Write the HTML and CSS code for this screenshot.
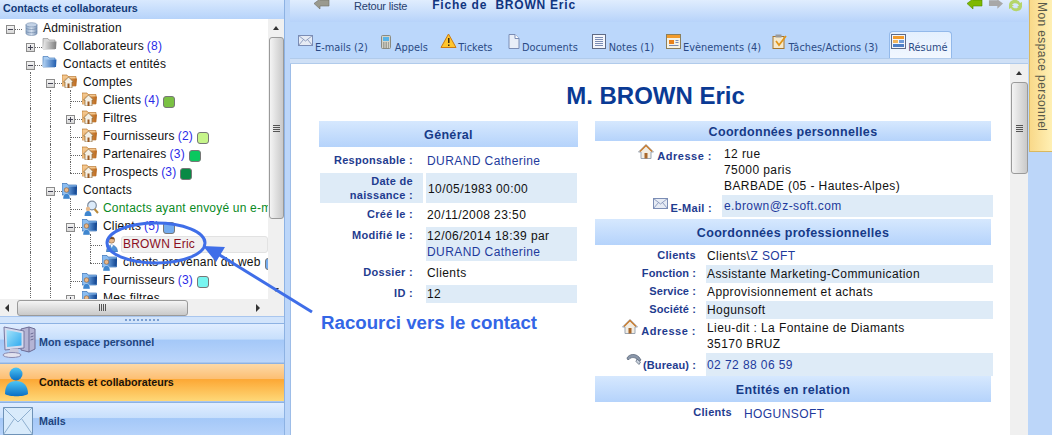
FILE: index.html
```html
<!DOCTYPE html>
<html lang="fr">
<head>
<meta charset="utf-8">
<title>Fiche de BROWN Eric</title>
<link rel="stylesheet" href="styles.css">
</head>
<body>
<svg class="defs" width="0" height="0" aria-hidden="true">
  <defs>
    <linearGradient id="fo" x1="0" y1="0" x2="1" y2="0"><stop offset="0" stop-color="#f3c183"/><stop offset="1" stop-color="#b9661a"/></linearGradient>
    <linearGradient id="fb" x1="0" y1="0" x2="1" y2="0"><stop offset="0" stop-color="#b5d4f4"/><stop offset="1" stop-color="#1f5cae"/></linearGradient>
    <linearGradient id="fbd" x1="0" y1="0" x2="1" y2="0"><stop offset="0" stop-color="#6fa6e2"/><stop offset="1" stop-color="#0c3f8c"/></linearGradient>
    <linearGradient id="fg" x1="0" y1="0" x2="1" y2="0"><stop offset="0" stop-color="#ececec"/><stop offset="1" stop-color="#7d7d7d"/></linearGradient>
    <linearGradient id="db" x1="0" y1="0" x2="1" y2="0"><stop offset="0" stop-color="#8fa9c9"/><stop offset=".5" stop-color="#d5e0ee"/><stop offset="1" stop-color="#7d95b5"/></linearGradient>
    <linearGradient id="pb" x1="0" y1="0" x2="0" y2="1"><stop offset="0" stop-color="#4cc5f5"/><stop offset="1" stop-color="#0a6fc4"/></linearGradient>
    <linearGradient id="scr" x1="0" y1="0" x2="1" y2="1"><stop offset="0" stop-color="#a5e4fb"/><stop offset="1" stop-color="#2fa9ee"/></linearGradient>
    <symbol id="i-db" viewBox="0 0 14 15"><path d="M1 3v9c0 1.500 2.700 2.500 6 2.500s6-1 6-2.500V3z" fill="url(#db)" stroke="#6d86a8" stroke-width=".6"/><ellipse cx="7" cy="3" rx="6" ry="2.300" fill="#c4d3e6" stroke="#6d86a8" stroke-width=".6"/><path d="M1 6.500c1 2 11 2 12 0M1 10c1 2 11 2 12 0" fill="none" stroke="#6d86a8" stroke-width=".7"/></symbol>
    <symbol id="i-fgrey" viewBox="0 0 15 13"><path d="M1 12V1.500h5l1 1.500h6v9z" fill="#d8d8d8" stroke="#8a8a8a" stroke-width=".6"/><path d="M1 12l1-7.500h12.500L14 12z" fill="url(#fg)"/></symbol>
    <symbol id="i-fblue" viewBox="0 0 15 13"><path d="M1 12V1.500h5l1 1.500h6v9z" fill="#a9cdf2" stroke="#2f68b0" stroke-width=".6"/><path d="M1 12l1-7.500h12.500L14 12z" fill="url(#fb)"/></symbol>
    <symbol id="i-fhouse" viewBox="0 0 15 14"><path d="M0 12V1h5l1 1.500h8V12z" fill="#f3c68d" stroke="#b06a1c" stroke-width=".6"/><path d="M.5 12l1-7.500H15L14 12z" fill="url(#fo)"/><path d="M6.500 3L1.500 8h1.500v6h7V8h1.500z" fill="#f4f0e6" stroke="#8c6a3a" stroke-width=".7"/><path d="M5.500 9.500h2V14h-2z" fill="#9c5a22"/></symbol>
    <symbol id="i-fcontact" viewBox="0 0 15 17"><path d="M0 13V1.500h5l1 1.500h8.500v10z" fill="#8cbdf0" stroke="#1d5aa8" stroke-width=".6"/><path d="M5 12.500l1.500-8H15l-.5 8z" fill="url(#fbd)"/><circle cx="4.500" cy="8" r="2.300" fill="#e9b787" stroke="#7a4a1e" stroke-width=".5"/><path d="M1 17c0-4 1.500-5.500 3.500-5.500S8 13 8 17z" fill="#3f86cf" stroke="#fff" stroke-width=".4"/></symbol>
    <symbol id="i-person" viewBox="0 0 12 16"><circle cx="5.500" cy="4" r="3.200" fill="#e6b98c" stroke="#6a4a2a" stroke-width=".5"/><path d="M2.500 3.500c0-3.500 6-3.500 6 0-2-.7-4-.7-6 0z" fill="#7a4a1e"/><path d="M.5 16c0-5 2.500-7 5-7s6 2 6 7z" fill="#4f93d8" stroke="#2a5f9e" stroke-width=".5"/><path d="M4.500 9h2.500l-1.200 3z" fill="#fff"/></symbol>
    <symbol id="i-search" viewBox="0 0 16 16"><circle cx="9" cy="5.500" r="4.300" fill="#dcebfa" stroke="#7f8da0" stroke-width="1.200"/><path d="M11.500 9l3.500 4" stroke="#b98a3a" stroke-width="2"/><circle cx="5" cy="9" r="2.200" fill="#e6b98c"/><path d="M1.500 16c0-3.500 1.500-5 3.500-5s3.500 1.500 3.500 5z" fill="#3f86cf"/></symbol>
    <symbol id="i-mail" viewBox="0 0 15 11"><rect x=".5" y=".5" width="14" height="10" fill="#e6ebf4" stroke="#7b8db5"/><path d="M.5.500L7.500 6l7-5.500M.5 10.500l5-6M14.500 10.500l-5-6" fill="none" stroke="#7b8db5" stroke-width=".8"/></symbol>
    <symbol id="i-home" viewBox="0 0 16 15"><path d="M8 .5L.5 8H3v6.500h10V8h2.500z" fill="#f2ede3" stroke="#9aa5b3"/><path d="M2 7.500L8 1.500l6 6" fill="none" stroke="#c8792a" stroke-width="1.400"/><rect x="6.500" y="9" width="3" height="5.500" fill="#a8672a"/></symbol>
    <symbol id="i-phone" viewBox="0 0 16 13"><path d="M1 5C3 1 9 0 13 4l2 3-2 1.500-2-2.500C8 4 5 4 3 6.500L1.500 6.500z" fill="#8a97aa" stroke="#4f5c70" stroke-width=".7"/><path d="M11 6l3.500 3-1.500 2.500-3-3z" fill="#c9d2de" stroke="#4f5c70" stroke-width=".7"/></symbol>
  </defs>
</svg>

<div class="app">
  <aside class="side">
    <div class="side-title">Contacts et collaborateurs</div>
    <div class="tree-box">
      <div class="tree">
        <div class="row"><span class="c e minus"></span><svg class="ico"><use href="#i-db" x="5" y="4" width="13" height="14"/></svg><span class="lbl">Administration</span></div>
        <div class="row"><span class="c"></span><span class="c t plus"></span><svg class="ico"><use href="#i-fgrey" x="2" y="1" width="15" height="13"/></svg><span class="lbl">Collaborateurs</span><b class="n">(8)</b></div>
        <div class="row"><span class="c"></span><span class="c l minus"></span><svg class="ico"><use href="#i-fblue" x="2" y="1" width="15" height="13"/></svg><span class="lbl">Contacts et entités</span></div>
        <div class="row"><span class="c"></span><span class="c v"></span><span class="c t minus"></span><svg class="ico"><use href="#i-fhouse" x="2" y="2" width="15" height="14"/></svg><span class="lbl">Comptes</span></div>
        <div class="row"><span class="c"></span><span class="c v"></span><span class="c v"></span><span class="c t"></span><svg class="ico"><use href="#i-fhouse" x="2" y="2" width="15" height="14"/></svg><span class="lbl">Clients</span><b class="n">(4)</b><i class="dot dot-a"></i></div>
        <div class="row"><span class="c"></span><span class="c v"></span><span class="c v"></span><span class="c t plus"></span><svg class="ico"><use href="#i-fhouse" x="2" y="2" width="15" height="14"/></svg><span class="lbl">Filtres</span></div>
        <div class="row"><span class="c"></span><span class="c v"></span><span class="c v"></span><span class="c t"></span><svg class="ico"><use href="#i-fhouse" x="2" y="2" width="15" height="14"/></svg><span class="lbl">Fournisseurs</span><b class="n">(2)</b><i class="dot dot-b"></i></div>
        <div class="row"><span class="c"></span><span class="c v"></span><span class="c v"></span><span class="c t"></span><svg class="ico"><use href="#i-fhouse" x="2" y="2" width="15" height="14"/></svg><span class="lbl">Partenaires</span><b class="n">(3)</b><i class="dot dot-c"></i></div>
        <div class="row"><span class="c"></span><span class="c v"></span><span class="c v"></span><span class="c l"></span><svg class="ico"><use href="#i-fhouse" x="2" y="2" width="15" height="14"/></svg><span class="lbl">Prospects</span><b class="n">(3)</b><i class="dot dot-d"></i></div>
        <div class="row"><span class="c"></span><span class="c v"></span><span class="c t minus"></span><svg class="ico"><use href="#i-fcontact" x="2" y="2" width="15" height="17"/></svg><span class="lbl">Contacts</span></div>
        <div class="row"><span class="c"></span><span class="c v"></span><span class="c v"></span><span class="c t"></span><svg class="ico"><use href="#i-search" x="3" y="2" width="16" height="16"/></svg><span class="lbl green">Contacts ayant envoyé un e-mail</span></div>
        <div class="row"><span class="c"></span><span class="c v"></span><span class="c v"></span><span class="c t minus"></span><svg class="ico"><use href="#i-fcontact" x="2" y="2" width="15" height="17"/></svg><span class="lbl">Clients</span><b class="n">(5)</b><i class="dot dot-e"></i></div>
        <div class="row"><span class="c"></span><span class="c v"></span><span class="c v"></span><span class="c v"></span><span class="c t"></span><svg class="ico"><use href="#i-person" x="6" y="2" width="12" height="16"/></svg><span class="lbl sel">BROWN Eric</span></div>
        <div class="row"><span class="c"></span><span class="c v"></span><span class="c v"></span><span class="c v"></span><span class="c l"></span><svg class="ico"><use href="#i-fcontact" x="2" y="2" width="15" height="17"/></svg><span class="lbl">clients provenant du web</span><i class="dot dot-e"></i></div>
        <div class="row"><span class="c"></span><span class="c v"></span><span class="c v"></span><span class="c t"></span><svg class="ico"><use href="#i-fcontact" x="2" y="2" width="15" height="17"/></svg><span class="lbl">Fournisseurs</span><b class="n">(3)</b><i class="dot dot-f"></i></div>
        <div class="row"><span class="c"></span><span class="c v"></span><span class="c v"></span><span class="c t plus"></span><svg class="ico"><use href="#i-fcontact" x="2" y="2" width="15" height="17"/></svg><span class="lbl">Mes filtres</span></div>
      </div>
      <div class="sb-v sb-tree"><span class="up"></span><span class="thumb"><span class="grip"></span></span><span class="down"></span></div>
    </div>
    <div class="sb-h"><span class="left"></span><span class="thumb"><span class="grip"></span></span><span class="right"></span></div>
    <div class="split"><span class="dots"></span></div>
    <nav class="nav">
      <div class="nav-item">
        <svg class="nav-ico" width="36" height="32" viewBox="0 0 36 32"><path d="M21 3l8-2 6 2v20l-6 3-8-2z" fill="#b4b4d4" stroke="#6c6c95"/><path d="M29 1v25" stroke="#6c6c95"/><path d="M30.500 8l3-1M30.500 11l3-1M30.500 14l3-1" stroke="#6c6c95"/><path d="M4 1l20 4v17L5 24z" fill="#d5dbee" stroke="#7777a0"/><path d="M6.500 4l15 3v12.500L7 21z" fill="url(#scr)"/><path d="M10 23l8-.5 1 4-10 .5z" fill="#c9c9dc"/><ellipse cx="12" cy="29" rx="9" ry="2.500" fill="#e2e2ee" stroke="#8a8ab0"/></svg>
        <span>Mon espace personnel</span>
      </div>
      <div class="nav-item active">
        <svg class="nav-ico" width="36" height="32" viewBox="0 0 36 32"><circle cx="16" cy="8" r="6.500" fill="url(#pb)"/><path d="M5 28c0-9 4-13 11-13s12 4 12 13c-4 3-19 3-23 0z" fill="url(#pb)"/></svg>
        <span>Contacts et collaborateurs</span>
      </div>
      <div class="nav-item">
        <svg class="nav-ico" width="36" height="28" viewBox="0 0 36 28"><rect x="3.500" y=".5" width="29" height="27" fill="#d9ebfb" stroke="#6f93b8"/><path d="M3.500.5L18 15 32.500.5M3.500 27.500l11-16M32.500 27.500l-11-16" fill="none" stroke="#8fb0d0"/></svg>
        <span>Mails</span>
      </div>
    </nav>
  </aside>

  <div class="gutter"></div>

  <main class="main">
    <header class="topbar">
      <svg class="tb-arrow" width="16" height="11" viewBox="0 0 16 11"><path d="M6 0L0 4.500 6 10V7h9V1H6z" fill="#9a9a8f" stroke="#6f6f66" stroke-width=".6"/></svg>
      <span class="back">Retour liste</span>
      <span class="fiche">Fiche de&nbsp; BROWN Eric</span>
      <span class="tb-right">
        <svg width="16" height="11" viewBox="0 0 16 11"><path d="M6 0L0 4.500 6 10V7h9V1H6z" fill="#7fb800" stroke="#4f8a00" stroke-width=".6"/></svg>
        <svg width="15" height="11" viewBox="0 0 16 11"><path d="M10 0l6 4.500L10 10V7H1V1h9z" fill="#a8a8a8"/></svg>
        <svg width="15" height="13" viewBox="0 0 15 13"><path d="M1 6c0-6 9-7 11-2l2-1v5h-5l2-1.500C9.500 3.500 5 3.500 4 6z" fill="#b5d56a"/><path d="M14 7c0 6-9 7-11 2l-2 1V6h5L4 7.500C5.500 10 10 10 11 7z" fill="#b5d56a"/></svg>
      </span>
    </header>
    <div class="tabs">
      <div class="tab tab-mail"><svg class="t-ico"><use href="#i-mail" x="0" y="1" width="15" height="11"/></svg><span>E-mails (2)</span></div>
      <div class="tab tab-calls"><svg class="t-ico" viewBox="0 0 15 15"><rect x="3.500" y="1.500" width="9" height="13" rx="1" fill="#d3d3c8" stroke="#8a8a80"/><rect x="5" y="3" width="6" height="4" fill="#58b4e8"/><path d="M5 9h6M5 11h6M5 13h6" stroke="#6f6f66" stroke-dasharray="1.500 1"/></svg><span>Appels</span></div>
      <div class="tab tab-tickets"><svg class="t-ico" viewBox="0 0 15 15"><path d="M7.500 0L15 13.500H0z" fill="#ffc62e" stroke="#cc7a10"/><path d="M7 4h1.500v5H7zM7 10.500h1.500V12H7z" fill="#3a2a10"/></svg><span>Tickets</span></div>
      <div class="tab tab-docs"><svg class="t-ico" viewBox="0 0 15 15"><path d="M4 .5h6l4 4v10H4z" fill="#e8eef8" stroke="#7b8db5"/><path d="M10 .5v4h4" fill="#fff" stroke="#7b8db5"/></svg><span>Documents</span></div>
      <div class="tab tab-notes"><svg class="t-ico" viewBox="0 0 15 15"><rect x=".5" y=".5" width="13" height="14" fill="#f4f6fb" stroke="#5f6b86"/><path d="M3 3.500h8M3 5.500h8M3 7.500h8M3 9.500h8M3 11.500h8" stroke="#7b8db5"/></svg><span>Notes (1)</span></div>
      <div class="tab tab-events"><svg class="t-ico" viewBox="0 0 15 15"><rect x=".5" y=".5" width="14" height="14" fill="#f6f2e4" stroke="#8b7f5c"/><rect x="1" y="1" width="13" height="3" fill="#f29b2b"/><rect x="3" y="6" width="5" height="4" fill="#e8811a"/><path d="M9.500 6.500h3M9.500 8.500h3M3 11.500h9.500" stroke="#7b8db5"/></svg><span>Evènements (4)</span></div>
      <div class="tab tab-tasks"><svg class="t-ico" viewBox="0 0 15 15"><rect x="1" y="2.500" width="11" height="12" fill="#f5e9cc" stroke="#a6762e"/><rect x="3.500" y=".5" width="6" height="3" fill="#9a9a9a"/><path d="M4 7l3 4 7-9" fill="none" stroke="#e0951a" stroke-width="1.700"/></svg><span>Tâches/Actions (3)</span></div>
      <div class="tab tab-sum on"><svg class="t-ico" viewBox="0 0 15 15"><rect x=".5" y=".5" width="14" height="14" fill="#f4f6fb" stroke="#5f6b86"/><rect x="2" y="2" width="11" height="3" fill="#f29b2b"/><rect x="2" y="6" width="5" height="3" fill="#f2b55b"/><rect x="8" y="6" width="5" height="3" fill="#6f9bd8"/><rect x="2" y="10" width="11" height="3" fill="#4f7fc4"/></svg><span>Résumé</span></div>
    </div>
    <div class="tabline"></div>
    <div class="body">
      <div class="sheet">
        <h1 class="name">M. BROWN Eric</h1>
        <div class="cols">
          <section class="col-l">
            <h2 class="sec sec-l">Général</h2>
            <div class="gen g-resp"><span class="k">Responsable :</span><span class="val link">DURAND Catherine</span></div>
            <div class="gen g-date"><span class="k shade">Date de<br>naissance :</span><span class="val shade mid">10/05/1983 00:00</span></div>
            <div class="gen g-line"><span class="k">Créé le :</span><span class="val">20/11/2008 23:50</span></div>
            <div class="gen g-mod"><span class="k">Modifié le :</span><span class="val shade">12/06/2014 18:39 par<br><span class="link">DURAND Catherine</span></span></div>
            <div class="gen g-line"><span class="k">Dossier :</span><span class="val">Clients</span></div>
            <div class="gen g-id"><span class="k">ID :</span><span class="val shade">12</span></div>
          </section>
          <section class="col-r">
            <h2 class="sec sec-p">Coordonnées personnelles</h2>
            <div class="perso addr"><span class="k k-wide"><svg class="k-ico k-home"><use href="#i-home" width="16" height="15"/></svg>Adresse :</span><span class="val">12 rue<br>75000 paris<br>BARBADE (05 - Hautes-Alpes)</span></div>
            <div class="perso mailrow"><span class="k"><svg class="k-ico k-mail"><use href="#i-mail" width="15" height="11"/></svg>E-Mail :</span><span class="val shade link">e.brown@z-soft.com</span></div>
            <h2 class="sec sec-b">Coordonnées professionnelles</h2>
            <div class="pro p-first"><span class="k k-c">Clients</span><span class="val">Clients\<span class="link">Z SOFT</span></span></div>
            <div class="pro"><span class="k">Fonction :</span><span class="val shade">Assistante Marketing-Communication</span></div>
            <div class="pro"><span class="k">Service :</span><span class="val">Approvisionnement et achats</span></div>
            <div class="pro"><span class="k">Société :</span><span class="val shade">Hogunsoft</span></div>
            <div class="pro p-addr"><span class="k k-a k-wide"><svg class="k-ico k-home"><use href="#i-home" width="16" height="15"/></svg>Adresse :</span><span class="val">Lieu-dit : La Fontaine de Diamants<br>35170 BRUZ</span></div>
            <div class="pro p-tel"><span class="k k-a"><svg class="k-ico k-phone"><use href="#i-phone" width="16" height="13"/></svg>(Bureau) :</span><span class="val shade link mid">02 72 88 06 59</span></div>
            <h2 class="sec sec-b">Entités en relation</h2>
            <div class="rel"><span class="k">Clients</span><span class="val link">HOGUNSOFT</span></div>
          </section>
        </div>
      </div>
      <div class="sb-v sb-main"><span class="up"></span><span class="thumb"><span class="grip"></span></span></div>
    </div>
  </main>

  <div class="rail"><div class="rail-tab">Mon espace personnel</div></div>
</div>

<svg class="mark" width="340" height="110" viewBox="0 0 340 110" aria-hidden="true">
  <ellipse cx="56" cy="23" rx="49" ry="20" fill="none" stroke="#3f6ee8" stroke-width="3"/>
  <path d="M212 92L118 34" stroke="#3f6ee8" stroke-width="3" fill="none"/>
  <path d="M103 26l22 1-9 15z" fill="#3f6ee8"/>
</svg>
<div class="callout">Racourci vers le contact</div>
</body>
</html>
```
FILE: styles.css
```css
* { box-sizing: border-box; }
html, body { margin: 0; padding: 0; height: 100%; overflow: hidden; }
body { font-family: "Liberation Sans", Arial, sans-serif; font-size: 12px; color: #111; background: #bcd6f9; position: relative; }
.defs { position: absolute; }
.app { display: flex; width: 1052px; height: 435px; }

/* sidebar */
.side { width: 285px; flex: none; display: flex; flex-direction: column; border-right: 1px solid #8db2e3; background: #d6e6fb; overflow: hidden; }
.side-title { height: 19px; flex: none; padding: 1px 3px 0; font-weight: bold; font-size: 10.7px; line-height: 15px; color: #123a78; background: linear-gradient(#d9e9fe, #b6d3fa); white-space: nowrap; }
.tree-box { height: 280px; flex: none; display: flex; background: #fff; overflow: hidden; }
.tree { flex: 1; min-width: 0; overflow: hidden; margin-top: -1px; }
.row { height: 18px; display: flex; align-items: center; white-space: nowrap; font-size: 12px; letter-spacing: .2px; }
.c { width: 20px; height: 18px; flex: none; position: relative; background-repeat: no-repeat; }
.c.v::before, .c.t::before { content: ""; position: absolute; left: 10px; top: 0; bottom: 0; border-left: 1px dotted #666; }
.c.l::before { content: ""; position: absolute; left: 10px; top: 0; height: 11px; border-left: 1px dotted #666; }
.c.t::after, .c.l::after, .c.e::after { content: ""; position: absolute; left: 10px; top: 11px; width: 12px; border-top: 1px dotted #666; }
.c.minus { background-image:
  linear-gradient(#445, #445),
  linear-gradient(#f4f4f4, #d8d8d8),
  linear-gradient(#8b8b8b, #8b8b8b);
  background-size: 5px 1px, 7px 7px, 9px 9px;
  background-position: 8px 11px, 7px 8px, 6px 7px; }
.c.plus { background-image:
  linear-gradient(#445, #445),
  linear-gradient(#445, #445),
  linear-gradient(#f4f4f4, #d8d8d8),
  linear-gradient(#8b8b8b, #8b8b8b);
  background-size: 5px 1px, 1px 5px, 7px 7px, 9px 9px;
  background-position: 8px 11px, 10px 9px, 7px 8px, 6px 7px; }
.c.minus::after, .c.plus::after { left: 15px; width: 7px; }
.c.minus::before, .c.plus::before { display: none; }
.ico { width: 23px; height: 18px; flex: none; overflow: visible; }
.lbl, .n { margin-top: 2px; }
.lbl { color: #111; }
.n { font-weight: normal; color: #2a2ae8; margin-left: 3px; }
.green { color: #0a8a1f; }
.lbl.sel { flex: 1; color: #8a0f1f; background: #f1f1f1; border: 1px solid #e2e2e2; border-radius: 3px; margin-left: -2px; padding: 0 1px; line-height: 15px; }
.dot { width: 12px; height: 12px; margin: 5px 0 0 4px; border-radius: 3px; border: 1px solid #777; flex: none; }
.dot-a { background: #7ac143; }
.dot-b { background: #c6f58a; }
.dot-c { background: #0bc85f; }
.dot-d { background: #098a45; }
.dot-e { background: #74acef; }
.dot-f { background: #78f5f0; }

/* scrollbars */
.sb-v { width: 16px; flex: none; background: #f0f0f0; position: relative; display: flex; flex-direction: column; align-items: center; }
.sb-tree { height: 280px; }
.sb-tree .thumb { height: 182px; }
.sb-v .up { height: 18px; width: 100%; flex: none; position: relative; }
.sb-v .up::after { content: ""; position: absolute; left: 50%; top: 7px; margin-left: -3px; border: 3px solid transparent; border-top: 0; border-bottom: 4px solid #333; }
.sb-v .down { position: absolute; bottom: 0; height: 18px; width: 100%; }
.sb-v .down::after { content: ""; position: absolute; left: 50%; top: 7px; margin-left: -3px; border: 3px solid transparent; border-bottom: 0; border-top: 4px solid #333; }
.thumb { display: flex; align-items: center; justify-content: center; flex: none; border: 1px solid #9a9a9a; border-radius: 3px; background: linear-gradient(90deg, #f4f4f4, #dcdcdc 55%, #c9c9c9); width: 15px; }
.grip { width: 7px; height: 7px; background: repeating-linear-gradient(#555 0 1px, transparent 1px 2px); }
.sb-h { height: 17px; flex: none; background: #f0f0f0; display: flex; align-items: center; position: relative; padding-left: 17px; }
.sb-h .thumb { width: 171px; height: 16px; background: linear-gradient(#f4f4f4, #dcdcdc 55%, #c9c9c9); }
.sb-h .grip { width: 7px; height: 7px; background: repeating-linear-gradient(90deg, #555 0 1px, transparent 1px 2px); }
.sb-h .left { position: absolute; left: 5px; top: 5px; border: 4px solid transparent; border-left: 0; border-right: 4px solid #333; }
.sb-h .right { position: absolute; left: 256px; top: 5px; border: 4px solid transparent; border-right: 0; border-left: 4px solid #333; }
.split { height: 7px; flex: none; background: #d2e4fb; display: flex; align-items: center; justify-content: center; border-top: 1px solid #a9c6ee; }
.dots { width: 34px; height: 2px; background: repeating-linear-gradient(90deg, #7b9fd1 0 2px, transparent 2px 4px); }
.nav { flex: none; display: flex; flex-direction: column; gap: 1px; background: #a9c6ee; }
.nav-item { height: 38px; flex: none; display: flex; align-items: center; gap: 3px; padding-bottom: 2px; font-weight: bold; font-size: 10.7px; color: #21457f; background: linear-gradient(#e0edff, #c7dffc 40%, #a4c8f8 42%, #bcd6fb); border-top: 1px solid #8db2e3; }
.nav-item:first-child { height: 39px; }
.nav-item.active { color: #1a1208; background: linear-gradient(#fdd9a7, #fdbf73 40%, #fca835 42%, #fed878); }
.nav-ico { flex: none; overflow: visible; }

.gutter { width: 5px; flex: none; background: #bcd6f9; }

/* main */
.main { width: 738px; flex: none; display: flex; flex-direction: column; }
.topbar { height: 22px; flex: none; display: flex; background: linear-gradient(#e0edfe, #b7d3fa); position: relative; }
.tb-arrow { margin: -1px 0 0 24px; flex: none; }
.back { margin-left: 24px; font-size: 11px; line-height: 13px; color: #27406e; letter-spacing: -.2px; }
.fiche { margin-left: 25px; font-weight: bold; font-size: 12px; line-height: 10px; letter-spacing: .78px; color: #10357f; white-space: nowrap; }
.tb-right { margin-left: auto; margin-right: 5px; display: flex; gap: 5px; height: 14px; align-items: flex-start; margin-top: -1px; }
.tabs { height: 36px; flex: none; display: flex; padding: 9px 0 0 8px; background: #bbd7fb; align-items: stretch; }
.tab { display: flex; gap: 2px; font-family: "DejaVu Sans", sans-serif; font-size: 9.8px; color: #2a4a85; white-space: nowrap; padding-top: 3px; }
.tab span { margin-top: 8px; line-height: 12px; }
.tab-calls { margin-left: 10px; }
.tab-tickets { margin-left: 13.5px; }
.tab-docs { margin-left: 12.5px; }
.tab-notes { margin-left: 14px; }
.tab-events { margin-left: 12px; }
.tab-tasks { margin-left: 10.5px; }
.tab-sum { margin-left: 11px; }
.t-ico { width: 15px; height: 15px; flex: none; overflow: visible; }
.tab.on { background: linear-gradient(#e4f0fe, #f1f7ff); border: 1px solid #93b9ea; border-bottom: 0; border-radius: 4px 4px 0 0; padding: 2px 4px 0 1px; }
.tabline { height: 6px; flex: none; background: #cfe0f6; border-top: 1px solid #b1cbeb; border-bottom: 1px solid #b1cbeb; }
.body { flex: 1; min-height: 0; display: flex; background: #fff; border-left: 1px solid #9dbde8; }
.sheet { flex: 1; min-width: 0; overflow: hidden; background: #fff; }
.sb-main { width: 18px; }
.sb-main .thumb { height: 92px; width: 17px; }
.name { margin: 18px 0 0; text-align: center; font-size: 24px; line-height: 28px; font-weight: bold; color: #0a3a94; padding-left: 10px; height: 39px; }
.cols { display: flex; padding-left: 28px; gap: 17px; align-items: flex-start; }
.col-l { width: 259px; flex: none; }
.col-r { width: 398px; flex: none; }
.sec { margin: 0; padding-top: 1px; font-size: 12.5px; font-weight: bold; text-align: center; color: #163a88; background: linear-gradient(#d6e8fe, #b5d3fb); letter-spacing: .32px; }
.sec-l { height: 26px; line-height: 26px; }
.sec-p { height: 20px; line-height: 20px; width: 396px; }
.sec-b { height: 26px; line-height: 26px; width: 396px; }
.k { font-weight: bold; font-size: 11px; color: #1f3c8f; text-align: right; letter-spacing: .3px; line-height: 14px; }
.val { font-size: 12px; line-height: 16px; color: #111; letter-spacing: .42px; }
.link { color: #1e3a9c; }
.shade { background: #deebf7; }
.mid { display: flex; align-items: center; }
.gen { display: grid; grid-template-columns: 103px 151px; column-gap: 3px; margin-left: 1px; }
.gen .k { padding-right: 10px; }
.gen .val { padding-left: 1px; }
.g-resp { height: 26px; }
.g-resp .k, .g-resp .val { padding-top: 6px; }
.g-date { height: 30px; }
.g-date .k { padding-top: 1px; }
.gen .mid { padding-left: 2px; padding-top: 1px; }
.g-line { height: 24px; }
.g-line .k, .g-line .val { padding-top: 4px; }
.g-mod { height: 34px; }
.g-mod .k, .g-mod .val { padding-top: 1px; }
.g-id { height: 18px; }
.g-id .k, .g-id .val { padding-top: 1px; }
.perso { display: grid; grid-template-columns: 127px 271px; }
.addr { height: 54px; }
.addr .val { padding: 5px 0 0 2px; }
.mailrow { height: 22px; margin-bottom: 2px; }
.mailrow .val { padding: 3px 0 0 2px; }
.perso .k { display: flex; align-items: flex-start; justify-content: flex-end; padding-top: 8px; padding-right: 10px; }
.mailrow.perso .k { padding-top: 6px; }
.k-ico { flex: none; overflow: visible; }
.k-home { width: 16px; height: 15px; margin: -5px 3px 0 0; }
.k-mail { width: 15px; height: 11px; margin: -3px 2px 0 0; }
.k-phone { width: 16px; height: 13px; margin: -5px 1px 0 0; }
.pro { display: grid; grid-template-columns: 111px 287px; height: 18px; }
.pro .k { display: flex; justify-content: flex-end; padding-right: 10px; padding-top: 1px; letter-spacing: .1px; }
.pro .k.k-wide, .perso .k.k-wide { letter-spacing: .5px; }
.pro .k-a { padding-top: 5px; }
.pro .k-c { padding: 3px 10px 0 0; letter-spacing: .3px; }
.pro .val { padding: 1px 0 0 1px; }
.p-first { height: 20px; }
.p-first .val { padding-top: 3px; }
.p-addr { height: 34px; }
.p-tel { height: 23px; }
.pro .mid { padding-top: 0; }
.rel { display: grid; grid-template-columns: 137px 1fr; padding-top: 3px; }
.rel .val { padding: 1px 0 0 12px; }

/* rail */
.rail { flex: 1; padding-left: 1px; background: #bcd6f9; }
.rail-tab { width: 23px; height: 152px; padding-top: 2px; background: linear-gradient(90deg, #f9d98a, #fff0b4); border-left: 1px solid #d9b860; border-bottom: 1px solid #d9b860; writing-mode: vertical-rl; font-size: 12px; letter-spacing: .4px; color: #5a5a4a; line-height: 21px; white-space: nowrap; }

/* annotation over the tree */
.mark { position: absolute; left: 100px; top: 220px; overflow: visible; pointer-events: none; }
.callout { position: absolute; left: 321px; top: 313px; font-size: 18.7px; line-height: 20px; font-weight: bold; color: #3366e6; white-space: nowrap; }
```
